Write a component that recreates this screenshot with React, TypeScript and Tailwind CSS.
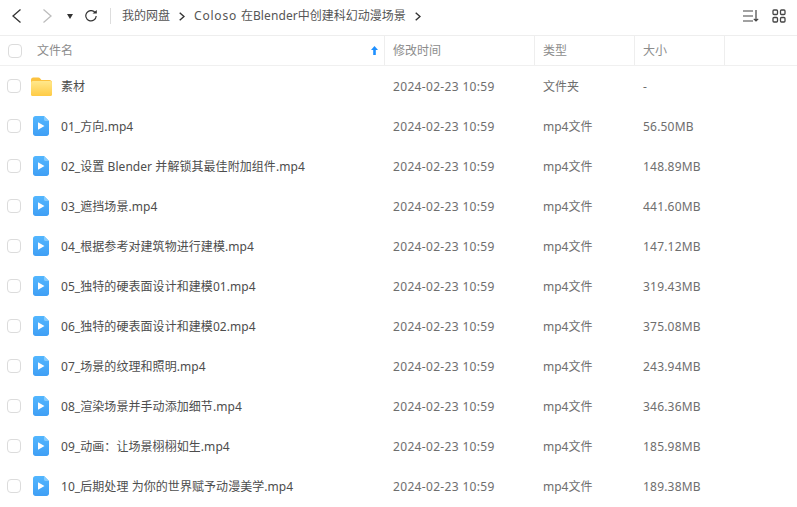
import React from 'react';

const font = "font-['Noto_Sans','Noto_Sans_CJK_SC',sans-serif]";

const files = [
  { name: '素材', type: '文件夹', size: '-', folder: true },
  { name: '01_方向.mp4', type: 'mp4文件', size: '56.50MB' },
  { name: '02_设置 Blender 并解锁其最佳附加组件.mp4', type: 'mp4文件', size: '148.89MB' },
  { name: '03_遮挡场景.mp4', type: 'mp4文件', size: '441.60MB' },
  { name: '04_根据参考对建筑物进行建模.mp4', type: 'mp4文件', size: '147.12MB' },
  { name: '05_独特的硬表面设计和建模01.mp4', type: 'mp4文件', size: '319.43MB' },
  { name: '06_独特的硬表面设计和建模02.mp4', type: 'mp4文件', size: '375.08MB' },
  { name: '07_场景的纹理和照明.mp4', type: 'mp4文件', size: '243.94MB' },
  { name: '08_渲染场景并手动添加细节.mp4', type: 'mp4文件', size: '346.36MB' },
  { name: '09_动画：让场景栩栩如生.mp4', type: 'mp4文件', size: '185.98MB' },
  { name: '10_后期处理 为你的世界赋予动漫美学.mp4', type: 'mp4文件', size: '189.38MB' },
];

const FolderIcon = () => (
  <svg width="21" height="19" viewBox="0 0 21 19">
    <defs>
      <linearGradient id="folderFront" x1="0" y1="0" x2="0" y2="1">
        <stop offset="0" stopColor="#ffe88c" />
        <stop offset="1" stopColor="#ffcb45" />
      </linearGradient>
    </defs>
    <path d="M0 3C0 1.600 .9 .5 2.200 .5h5.200c.8 0 1.300.3 1.800.9L10.400 3H18.500c1.400 0 2.500 1 2.500 2.400V17c0 1.100-.9 2-2 2H2c-1.100 0-2-.9-2-2z" fill="#fcc23f" />
    <rect x="0" y="4" width="21" height="15" rx="1.800" fill="url(#folderFront)" />
  </svg>
);

const VideoIcon = () => (
  <svg width="16" height="20" viewBox="0 0 16 20">
    <defs>
      <linearGradient id="videoBody" x1="0" y1="0" x2="0" y2="1">
        <stop offset="0" stopColor="#52b6ff" />
        <stop offset="1" stopColor="#3f9ff5" />
      </linearGradient>
    </defs>
    <path d="M2.500 0H11L16 5V17.500C16 18.900 14.900 20 13.500 20H2.500C1.100 20 0 18.900 0 17.500V2.500C0 1.100 1.100 0 2.500 0Z" fill="url(#videoBody)" />
    <path d="M11 0L16 5H12.500C11.700 5 11 4.300 11 3.500Z" fill="#86cbfd" />
    <path d="M5 6.200L11.500 10L5 13.800Z" fill="#fff" />
  </svg>
);

const Check = () => <div className="w-[14px] h-[14px] rounded-[4px] border border-[#dcdcdc] bg-white shrink-0" />;

const Crumb = () => (
  <svg width="6" height="9" viewBox="0 0 6 9" fill="none" stroke="#333" strokeWidth="1.400" className="ml-[9px] shrink-0">
    <path d="M.7 .7L5 4.500L.7 8.300" />
  </svg>
);

const App = () => {
  return (
    <div className={`w-[797px] h-[507px] overflow-hidden bg-white ${font} text-[12px] text-[#6e6e6e]`}>
      <header className="h-[36px] pb-[3px] border-b border-[#eeeeee] flex items-center pl-[12px] pr-[11px]">
        <svg width="9" height="14" viewBox="0 0 9 14" fill="none" stroke="#333" strokeWidth="1.300"><path d="M8.500 .5L1 7L8.500 13.500" /></svg>
        <svg width="9" height="14" viewBox="0 0 9 14" fill="none" stroke="#bdbdbd" strokeWidth="1.300" className="ml-[22px]"><path d="M.5 .5L8 7L.5 13.500" /></svg>
        <svg width="6" height="5" viewBox="0 0 6 5" className="ml-[15px]"><path d="M0 0H6L3 5Z" fill="#333" /></svg>
        <svg width="12" height="12" viewBox="0 0 12 12" fill="none" stroke="#333" strokeWidth="1.200" className="ml-[12px]">
          <path d="M10.300 2.800A5.200 5.200 0 1 0 11.200 6" />
          <path d="M7.500 3.500H11.800V0Z" fill="#333" stroke="none" />
        </svg>
        <div className="w-px h-[16px] bg-[#dddddd] ml-[13px]" />
        <nav className="flex items-center ml-[11px] text-[#555] whitespace-nowrap">
          <span>我的网盘</span>
          <Crumb />
          <span className="ml-[9px]">
            <span className="tracking-[0.8px]">Coloso </span>在<span className="tracking-[0.1px]">Blender</span>中创建科幻动漫场景
          </span>
          <Crumb />
        </nav>
        <div className="ml-auto flex items-center gap-[13px]">
          <svg width="16" height="12" viewBox="0 0 16 12" fill="none" stroke="#444" strokeWidth="1.200">
            <path d="M0 1H10M0 6H10M0 11H10M13 0V11M10.800 8.800L13 11L15.200 8.800" />
          </svg>
          <svg width="14" height="14" viewBox="0 0 14 14" fill="none" stroke="#444" strokeWidth="1.300">
            <rect x="1" y="1" width="4.500" height="4.500" rx="1" />
            <rect x="8.500" y="1" width="4.500" height="4.500" rx="1" />
            <rect x="1" y="8.500" width="4.500" height="4.500" rx="1" />
            <rect x="8.500" y="8.500" width="4.500" height="4.500" rx="1" />
          </svg>
        </div>
      </header>

      <div className="h-[30px] border-b border-[#f0f0f0] flex items-center text-[#8c8c8c]">
        <div className="w-[385px] h-full flex items-center pl-[8px] pr-[6px] border-r border-[#eeeeee]">
          <Check />
          <span className="ml-[15px]">文件名</span>
          <svg width="7" height="9" viewBox="0 0 7 9" className="ml-auto"><path d="M3.500 0L7 4H4.800V9H2.200V4H0Z" fill="#1e90ff" /></svg>
        </div>
        <div className="w-[150px] h-full flex items-center pl-[8px] border-r border-[#eeeeee]">修改时间</div>
        <div className="w-[100px] h-full flex items-center pl-[8px] border-r border-[#eeeeee]">类型</div>
        <div className="w-[90px] h-full flex items-center pl-[8px] border-r border-[#eeeeee]">大小</div>
      </div>

      <div>
        {files.map((f) => (
          <div key={f.name} className="h-[40px] flex items-center">
            <div className="w-[385px] flex items-center pl-[7px]">
              <Check />
              <div className="w-[22px] ml-[9px] flex justify-center shrink-0">
                {f.folder ? <FolderIcon /> : <VideoIcon />}
              </div>
              <span className="ml-[9px] pt-[2px] text-[#4d4d4d] tracking-[0.06px] whitespace-nowrap">{f.name}</span>
            </div>
            <div className="w-[150px] pl-[8px] pt-[2px] tracking-[0.33px] whitespace-nowrap">2024-02-23 10:59</div>
            <div className="w-[100px] pl-[8px] pt-[2px]">{f.type}</div>
            <div className="w-[90px] pl-[8px] pt-[2px] tracking-[0.2px]">{f.size}</div>
          </div>
        ))}
      </div>
    </div>
  );
};

export default App;
